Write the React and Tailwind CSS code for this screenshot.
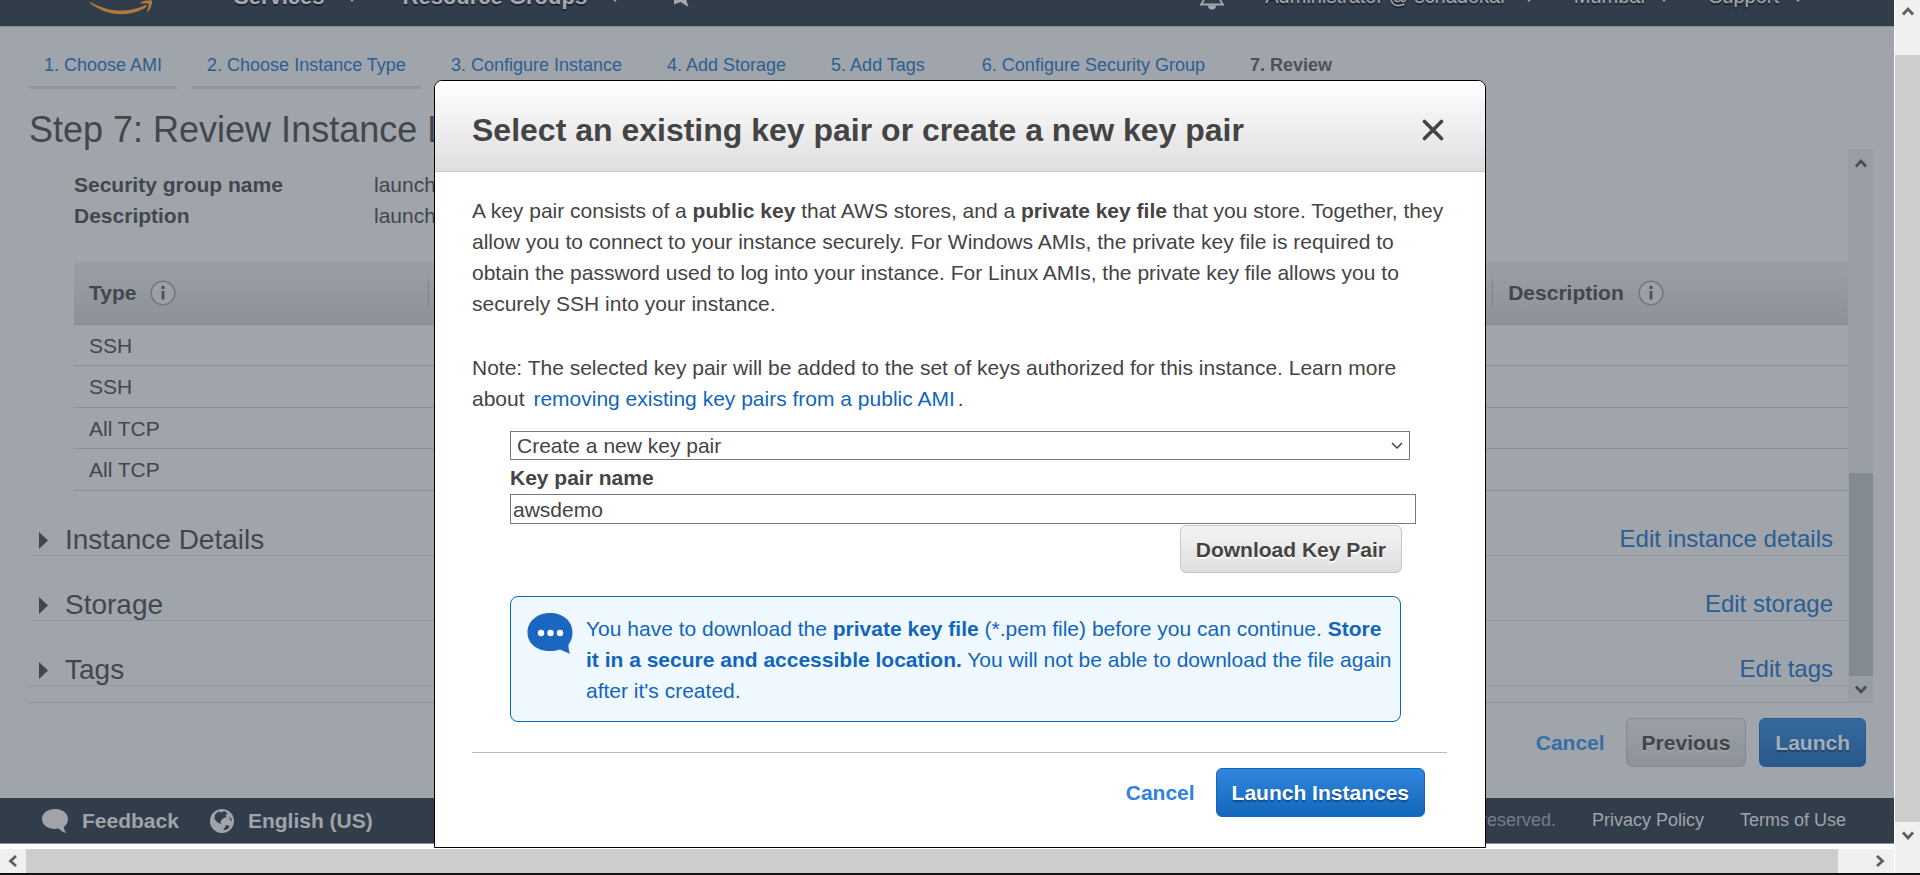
import React from "react";

const TABS = [
  "1. Choose AMI",
  "2. Choose Instance Type",
  "3. Configure Instance",
  "4. Add Storage",
  "5. Add Tags",
  "6. Configure Security Group",
];

const COLUMNS = ["Type", "Protocol", "Port Range", "Source", "Description"];

const RULES = [
  ["SSH", "TCP", "22", "0.0.0.0/0", ""],
  ["SSH", "TCP", "22", "::/0", ""],
  ["All TCP", "TCP", "0 - 65535", "0.0.0.0/0", ""],
  ["All TCP", "TCP", "0 - 65535", "::/0", ""],
];

const SECTIONS = [
  ["Instance Details", "Edit instance details"],
  ["Storage", "Edit storage"],
  ["Tags", "Edit tags"],
];

function Arrow({ className = "", d }) {
  return (
    <svg viewBox="0 0 14 14" className={`size-[14px] shrink-0 ${className}`} fill="none" stroke="currentColor" strokeWidth="2.8" aria-hidden="true">
      <path d={d} />
    </svg>
  );
}

const UP = "M2 10.5 7 5l5 5.500";
const DOWN = "M2 4.500 7 10l5-5.500";
const LEFT = "M10 2 4.500 7 10 12";
const RIGHT = "M4 2 9.500 7 4 12";

function Caret() {
  return (
    <svg viewBox="0 0 10 6" className="mt-1.5 h-1.5 w-2.5" fill="currentColor" aria-hidden="true">
      <path d="M0 0h10L5 6z" />
    </svg>
  );
}

function InfoIcon() {
  return (
    <svg viewBox="0 0 26 26" className="size-[26px]" aria-hidden="true">
      <circle cx="13" cy="13" r="11.800" fill="#9ca0a7" stroke="#72777e" strokeWidth="1.500" />
      <circle cx="13" cy="7.500" r="1.700" fill="#4b5057" />
      <path d="M13 11v8.500" stroke="#4b5057" strokeWidth="2.800" />
    </svg>
  );
}

function NavBar() {
  return (
    <header className="flex h-[27px] items-end overflow-hidden border-b border-[#868b92] bg-[#323d4b] text-[#a6a9ad] [text-shadow:0_2px_1px_#1c2430]">
      <nav className="flex h-[60px] w-full shrink-0 items-center justify-between pr-[91px] pl-[88px]">
        <div className="flex items-center text-[22px] font-bold">
          <svg viewBox="0 0 70 60" className="mr-[76px] h-[60px] w-[70px]" fill="#ad7c3a" aria-hidden="true">
            <path d="M2.300 36c8 4.800 19 8.600 30.500 8.600 8.500 0 17-2 24.500-5.300 1.300-.6 2.400.8 1 1.800C51.800 45.700 42.500 48.200 33.500 48.200 21.500 48.200 10.500 43.800 2 37c-.7-.6-.3-1.300.3-1Z" />
            <path d="M52.500 36.500c2.400-1.700 6.200-2.200 10-2.300 1.400 0 1.700.6 1.600 1.900-.3 3.800-1.900 7.500-4.200 9.500-.6.500-1.200.2-1-.5 1-2.400 2.300-6.200 1.900-7.200-.4-1-4.700-.8-7.800-.5-.8 0-1-.5-.5-.9Z" />
          </svg>
          <a href="#services" className="mr-[22px]">Services</a>
          <Caret />
          <a href="#groups" className="mr-[23px] ml-[46px]">Resource Groups</a>
          <Caret />
          <svg viewBox="0 0 20 40" className="ml-[49px] h-10 w-5" fill="currentColor" aria-label="Pin">
            <path d="M4 8h10v8l3 7 2.500 8-8-5-6.500 2.500V16z" />
          </svg>
        </div>
        <div className="flex items-center text-[20px]">
          <svg viewBox="0 0 24 28" className="mr-[41px] h-7 w-6" fill="none" stroke="currentColor" strokeWidth="1.800" aria-label="Notifications">
            <path d="M12 3c-5 0-7 4-7 8 0 6-1.500 8.500-4 11.500h22c-2.500-3-4-5.500-4-11.500 0-4-2-8-7-8Z" />
            <path d="M8 23.500a4 4 0 0 0 8 0z" fill="currentColor" stroke="none" />
          </svg>
          <a href="#account" className="mr-[17px]">Administrator @ schadokar</a>
          <Caret />
          <a href="#region" className="mr-3.5 ml-10">Mumbai</a>
          <Caret />
          <a href="#support" className="mr-3.5 ml-10">Support</a>
          <Caret />
        </div>
      </nav>
    </header>
  );
}

function Wizard() {
  return (
    <main className="flex flex-col bg-[#a0a4ab] pt-[25px] pr-[21px] pl-[29px] text-[#43474d]">
      <nav className="flex gap-[15px] text-[18px] leading-[27px]">
        {TABS.map((t) => (
          <a key={t} href="#step" className="border-b-3 border-[#92969e] px-[15px] pb-[7px] text-[#2c5f91] nth-6:ml-3">
            {t}
          </a>
        ))}
        <span className="px-[15px] font-bold text-[#4d5157]" aria-current="step">7. Review</span>
      </nav>
      <h1 className="mt-[22px] text-[36px] leading-[38px]">Step 7: Review Instance Launch</h1>

      <div className="flex border-b border-[#92969e]">
        <div className="grow pt-5 pb-4">
          <dl className="grid grid-cols-[300px_1fr] pl-[45px] leading-[31px]">
            <dt className="font-bold">Security group name</dt>
            <dd>launch-wizard-1</dd>
            <dt className="font-bold">Description</dt>
            <dd>launch-wizard-1 created</dd>
          </dl>
          <div className="mt-[31px] pl-[45px]">
            <table className="w-full table-fixed border-separate border-spacing-0 text-left">
              <thead>
                <tr className="bg-linear-to-b from-[#9a9ea5] to-[#8d9198]">
                  {COLUMNS.map((c) => (
                    <th key={c} className="group h-[63px] border-b border-[#858a91] p-0 font-bold">
                      <div className="flex h-7 items-center gap-3.5 border-r border-[#7f848b] pl-[15px] group-last:border-r-0">
                        {c}
                        <InfoIcon />
                      </div>
                    </th>
                  ))}
                </tr>
              </thead>
              <tbody>
                {RULES.map((row, i) => (
                  <tr key={i} className="h-[41px] even:h-[42px]">
                    {row.map((cell, j) => (
                      <td key={j} className="border-b border-[#8b9097] py-0 pl-[15px] leading-[31px]">{cell}</td>
                    ))}
                  </tr>
                ))}
              </tbody>
            </table>
          </div>
          {SECTIONS.map(([title, edit]) => (
            <section key={title} className="mt-8 flex h-[33px] items-center justify-between border-b border-[#92969e] pr-[15px] pl-2.5">
              <h2 className="flex items-center gap-[17px] pt-0.5 text-[28px] leading-8">
                <svg viewBox="0 0 9 17" className="h-[17px] w-[9px]" fill="currentColor" aria-hidden="true">
                  <path d="M0 0 9 8.500 0 17z" />
                </svg>
                {title}
              </h2>
              <a href="#edit" className="text-[24px] leading-8 text-[#2a5d91]">{edit}</a>
            </section>
          ))}
        </div>
        <div className="flex w-[25px] shrink-0 flex-col items-center border-l border-[#9a9ea5] bg-[#999da4] text-[#4b4f55]">
          <Arrow d={UP} className="my-[7px]" />
          <div className="grow" />
          <div className="h-[203px] w-full bg-[#838a91]" />
          <Arrow d={DOWN} className="my-1.5" />
        </div>
      </div>

      <div className="flex items-center justify-end gap-[13px] py-[15px] pr-[7px] pb-[31px] font-bold">
        <button className="mr-2 text-[#386da6]">Cancel</button>
        <button className="h-[49px] rounded-md border border-[#858a91] bg-linear-to-b from-[#9b9fa6] to-[#8e9299] px-[15px] text-[#414449] [text-shadow:0_2px_1px_#a0a4ab]">Previous</button>
        <button className="h-[49px] rounded-md border border-[#285b8d] bg-linear-to-b from-[#386a9e] to-[#29588b] px-[15px] text-[#a5adb6] [text-shadow:0_2px_1px_#1f456c]">Launch</button>
      </div>
    </main>
  );
}

function Footer() {
  return (
    <footer className="flex h-[46px] items-center border-b border-[#8d9298] bg-[#323d4b] pr-12 pl-[42px] text-[#a0a4a9]">
      <a href="#feedback" className="flex items-center gap-3.5 font-bold">
        <svg viewBox="0 0 26 24" className="h-6 w-[26px]" fill="currentColor" aria-hidden="true">
          <path d="M13 0C20.500 0 26 4.300 26 10c0 3.200-1.500 6-4.200 7.800.2 2.200.9 4.200 2.400 6.200-3.300-.8-5.800-2.300-7.500-4.400-1.200.3-2.400.4-3.700.4C5.500 20 0 15.700 0 10S5.500 0 13 0Z" />
        </svg>
        Feedback
      </a>
      <a href="#language" className="ml-[31px] flex items-center gap-3.5 font-bold">
        <svg viewBox="0 0 24 24" className="size-6" aria-hidden="true">
          <circle cx="12" cy="12" r="12" fill="currentColor" />
          <path d="M8.500 2.500 5 5.500 4.500 10l3 3.500 3.500 1.500-.5-3 2.500-2.500 3.500-1.500-1-2.500L18 5l-3.500-3-3 1.500z" fill="#323d4b" />
          <path d="m16 16 3.500 1-1 2.500-3.500 1.500-2-.5 2-2z" fill="#323d4b" />
          <path d="m19 7 3 3v3l-2.500-2.500z" fill="#5c646e" />
        </svg>
        English (US)
      </a>
      <div className="ml-auto flex gap-9 text-[18px]">
        <span className="text-[#737f86]">© 2008 - 2019, Amazon Web Services, Inc. or its affiliates. All rights reserved.</span>
        <a href="#privacy">Privacy Policy</a>
        <a href="#terms">Terms of Use</a>
      </div>
    </footer>
  );
}

function KeyPairDialog() {
  return (
    <div role="dialog" aria-labelledby="dialog-title" className="w-[1052px] max-w-full rounded-t-lg border border-black bg-white text-[#444]">
      <div className="flex h-[91px] items-center justify-between rounded-t-[7px] border-b border-[#c8c8c8] bg-linear-to-b from-white to-[#dfdfdf] pt-2 pr-[41px] pl-[37px]">
        <h2 id="dialog-title" className="text-[32px] leading-9 font-bold">Select an existing key pair or create a new key pair</h2>
        <button aria-label="Close">
          <svg viewBox="0 0 22 22" className="size-[22px]" fill="none" stroke="#444" strokeWidth="3.600" strokeLinecap="round">
            <path d="m2.500 2.500 17 17m0-17-17 17" />
          </svg>
        </button>
      </div>
      <div className="pt-[23px] pr-[38px] pb-[30px] pl-[37px] leading-[31px]">
        <p>
          A key pair consists of a <strong>public key</strong> that AWS stores, and a <strong>private key file</strong> that you store. Together, they allow you to connect to your instance securely. For Windows AMIs, the private key file is required to obtain the password used to log into your instance. For Linux AMIs, the private key file allows you to securely SSH into your instance.
        </p>
        <p className="mt-[33px]">
          Note: The selected key pair will be added to the set of keys authorized for this instance. Learn more about <a href="#ami" className="px-[3px] text-[#1166bb]">removing existing key pairs from a public AMI</a>.
        </p>
        <form className="mt-[17px] pr-[31px] pl-[38px]" onSubmit={(e) => e.preventDefault()}>
          <div className="relative mr-1.5">
            <select aria-label="Key pair option" className="block h-[29px] w-full appearance-none border border-[#7a7a7a] bg-white pl-1.5 leading-[27px]">
              <option>Create a new key pair</option>
              <option>Choose an existing key pair</option>
              <option>Proceed without a key pair</option>
            </select>
            <svg viewBox="0 0 12 8" className="pointer-events-none absolute top-[11px] right-[7px] h-2 w-3" fill="none" stroke="#444" strokeWidth="1.500" aria-hidden="true">
              <path d="m1 1 5 5 5-5" />
            </svg>
          </div>
          <label htmlFor="key-name" className="mt-0.5 block leading-8 font-bold">Key pair name</label>
          <input id="key-name" type="text" defaultValue="awsdemo" className="block h-[30px] w-full border border-[#7a7a7a] px-0.5" />
          <div className="mt-px mr-3.5 flex justify-end">
            <button className="h-12 rounded-md border border-[#c6c6c6] bg-linear-to-b from-[#f4f4f4] to-[#dfdfdf] px-[15px] font-bold [text-shadow:0_2px_1px_#fff]">Download Key Pair</button>
          </div>
          <div className="mt-[23px] mr-[15px] flex items-start gap-[13px] rounded-lg border border-[#0d66b8] bg-[#f0f8ff] pt-4 pr-1 pb-[15px] pl-4 text-[#1166bb]">
            <svg viewBox="0 0 46 41" className="h-[41px] w-[46px] shrink-0" aria-hidden="true">
              <path d="M23 0C36 0 45.500 8 45.500 19.500c0 5-1.500 9-4 12 0 3.500.3 6.500 1.500 9.500-4-2-7.500-3.500-10.500-4.500-3 1-6 1.500-9.500 1.500C10 38 .5 30.500.5 19.500S10 0 23 0Z" fill="#1a66c0" />
              <circle cx="14" cy="20" r="3.200" fill="#fff" />
              <circle cx="23.500" cy="20" r="3.200" fill="#fff" />
              <circle cx="33" cy="20" r="3.200" fill="#fff" />
            </svg>
            <p>
              You have to download the <strong>private key file</strong> (*.pem file) before you can continue. <strong>Store it in a secure and accessible location.</strong> You will not be able to download the file again after it's created.
            </p>
          </div>
        </form>
        <div className="mt-[30px] flex items-center justify-end gap-[21px] border-t border-[#bbb] pt-[15px] pr-[22px] font-bold">
          <button className="text-[#2e82dc]">Cancel</button>
          <button className="h-[49px] rounded-md border border-[#1166bb] bg-linear-to-b from-[#3186dd] to-[#1166bb] px-[15px] text-white [text-shadow:0_2px_1px_#0d4f93]">Launch Instances</button>
        </div>
      </div>
    </div>
  );
}

export default function App() {
  return (
    <div className="relative flex min-h-screen flex-col overflow-hidden bg-white font-['Liberation_Sans',Arial,sans-serif] text-[21px]">
      <div className="flex grow">
        <div className="flex min-w-0 grow flex-col border-r border-white">
          <NavBar />
          <Wizard />
          <Footer />
          <div className="mt-auto flex h-6 items-center bg-[#f0f0f0] text-[#5f5f5f]">
            <Arrow d={LEFT} className="mx-1.5" />
            <div className="h-full grow bg-[#cdcdcd]" />
            <Arrow d={RIGHT} className="mr-[7px] ml-[35px]" />
          </div>
        </div>
        <div className="flex w-[25px] shrink-0 flex-col items-center bg-[#f0f0f0] text-[#5f5f5f]">
          <Arrow d={UP} className="mt-1 mb-[37px]" />
          <div className="w-full grow bg-[#cdcdcd]" />
          <Arrow d={DOWN} className="mt-1.5 mb-[31px]" />
        </div>
      </div>
      <div className="h-0.5 bg-[#101214]" />
      <div className="absolute inset-x-0 top-20 flex justify-center">
        <KeyPairDialog />
      </div>
    </div>
  );
}
